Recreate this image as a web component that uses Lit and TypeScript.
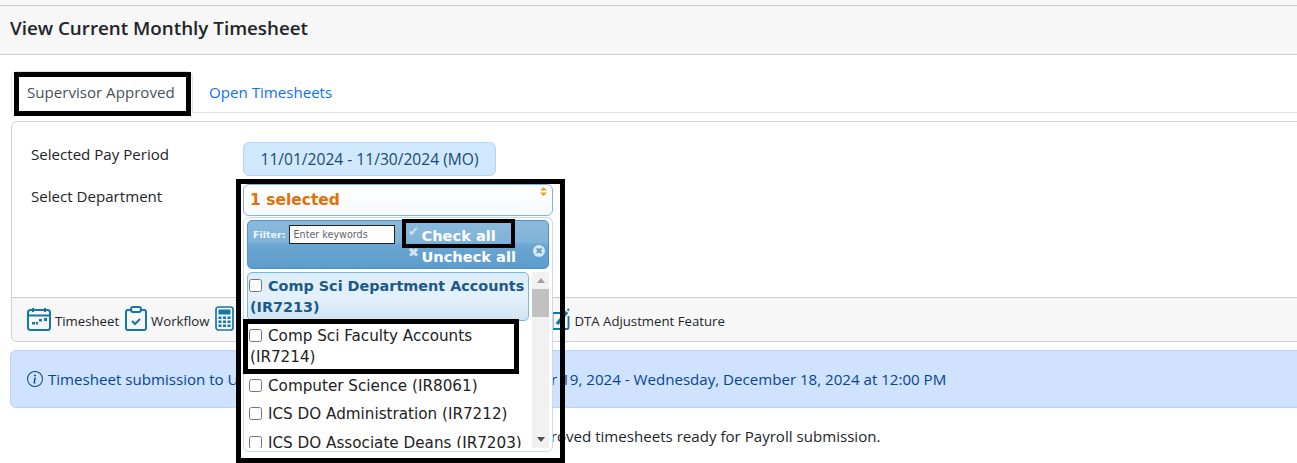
import { LitElement, html, css, svg } from 'lit'
import { customElement } from 'lit/decorators.js'

const DEPARTMENTS = [
  { name: 'Comp Sci Department Accounts (IR7213)', hover: true },
  { name: 'Comp Sci Faculty Accounts (IR7214)', hover: false },
  { name: 'Computer Science (IR8061)', hover: false },
  { name: 'ICS DO Administration (IR7212)', hover: false },
  { name: 'ICS DO Associate Deans (IR7203)', hover: false },
]

const calendarIcon = svg`<svg class="icon" width="24" height="24" viewBox="0 0 24 24" fill="none" stroke="#1577a8" stroke-width="2">
  <rect x="1" y="3" width="22" height="20" rx="2.5"/><path d="M1 8.500h22M6 1v4M18 1v4"/>
  <g fill="#1577a8" stroke="none"><rect x="5" y="15" width="3" height="2.5"/><rect x="9" y="15" width="2" height="2.5"/><rect x="12" y="12" width="3" height="2.5"/><rect x="17" y="11" width="3" height="3"/></g>
</svg>`

const clipboardIcon = svg`<svg class="icon" width="22" height="25" viewBox="0 0 22 25" fill="none" stroke="#1577a8" stroke-width="2">
  <path d="M6 4H3a2 2 0 0 0-2 2v16a2 2 0 0 0 2 2h16a2 2 0 0 0 2-2V6a2 2 0 0 0-2-2h-3"/>
  <rect x="6" y="1" width="10" height="5" rx="2"/><path d="M7 15l3 3 5-5"/>
</svg>`

const calculatorIcon = svg`<svg class="icon" width="19" height="25" viewBox="0 0 19 25" fill="none" stroke="#1577a8" stroke-width="1.7">
  <rect x="1" y="1" width="17" height="23" rx="2.5"/>
  <g fill="#1577a8" stroke="none"><rect x="3.5" y="3.5" width="12" height="5"/><rect x="3.5" y="10.5" width="3" height="2.5"/><rect x="8" y="10.5" width="3" height="2.5"/><rect x="12.5" y="10.5" width="3" height="2.5"/><rect x="3.5" y="14.5" width="3" height="2.5"/><rect x="8" y="14.5" width="3" height="2.5"/><rect x="12.5" y="14.5" width="3" height="2.5"/><rect x="3.5" y="18.5" width="3" height="2.5"/><rect x="8" y="18.5" width="3" height="2.5"/><rect x="12.5" y="18.5" width="3" height="2.5"/></g>
</svg>`

const editIcon = svg`<svg class="icon" width="18" height="24" viewBox="0 0 18 24" fill="none" stroke="#1577a8" stroke-width="1.8">
  <path d="M8 6H2a1.5 1.5 0 0 0-1.500 1.500v13A1.500 1.500 0 0 0 2 22h13a1.500 1.500 0 0 0 1.500-1.500V9"/>
  <path d="M5 17l10-12" stroke-width="3.4"/><path d="M15.500 2l1.500 1.500" stroke-width="2"/>
</svg>`

const infoIcon = svg`<svg width="16" height="16" viewBox="0 0 16 16" fill="#084298">
  <path d="M8 15A7 7 0 1 1 8 1a7 7 0 0 1 0 14zm0 1A8 8 0 1 0 8 0a8 8 0 0 0 0 16z"/>
  <path d="M8.930 6.590l-2.290.287-.082.380.450.083c.294.070.352.176.288.469l-.738 3.468c-.194.897.105 1.319.808 1.319.545 0 1.178-.252 1.465-.598l.088-.416c-.200.176-.492.246-.686.246-.275 0-.375-.193-.304-.533L8.930 6.590zM9 4.500a1 1 0 1 1-2 0 1 1 0 0 1 2 0z"/>
</svg>`

@customElement('app-root')
export class AppRoot extends LitElement {
  static override styles = css`
    :host {
      display: block;
      position: relative;
      height: 463px;
      overflow: hidden;
      background: #fff;
      font-family: 'Open Sans', 'Noto Sans', sans-serif;
      font-size: 15.1px;
      color: #212529;
    }

    .top-strip {
      height: 5px;
      background: #f6f8fa;
      border-bottom: 1px solid #ccc;
    }

    .page-title {
      margin: 0;
      height: 49px;
      box-sizing: border-box;
      display: flex;
      align-items: center;
      padding: 0 10px 4px;
      font-size: 18.8px;
      font-weight: 600;
      color: #212529;
      background: #f7f7f7;
      border-bottom: 1px solid #ccc;
    }

    .content {
      padding: 16px 10px 0 11px;
      margin-right: -30px;
    }

    .tabs {
      display: flex;
      height: 41px;
      border-bottom: 1px solid #dee2e6;
    }

    .tab {
      display: flex;
      align-items: center;
      padding: 0 16px;
      color: #0d6efd;
      white-space: nowrap;
    }

    .tab.active {
      color: #495057;
      border: 1px solid #dee2e6;
      border-bottom-color: #fff;
      border-radius: 6px 6px 0 0;
      height: 42px;
      box-sizing: border-box;
      background: #fff;
      width: 182px;
      padding: 0 15px;
    }

    .card {
      margin-top: 8px;
      border: 1px solid #d0d0d0;
      border-radius: 6px;
      height: 221px;
      box-sizing: border-box;
      display: flex;
      flex-direction: column;
    }

    .card-body {
      flex: 1;
      padding: 20px 19px 0;
      display: flex;
      flex-direction: column;
      gap: 8px;
    }

    .row {
      display: flex;
      align-items: flex-start;
    }

    .row .label {
      width: 212px;
      line-height: 24px;
    }

    .period {
      width: 253px;
      height: 34px;
      box-sizing: border-box;
      display: flex;
      align-items: center;
      justify-content: center;
      background: #cfe8fc;
      border: 1px solid #b6d4fe;
      border-radius: 6px;
      color: #1c4a72;
      font-size: 15.6px;
    }

    .card-footer {
      height: 44px;
      box-sizing: border-box;
      display: flex;
      align-items: center;
      padding: 0 15px 2px;
      font-size: 13.2px;
      background: #f7f7f7;
      border-top: 1px solid #ccc;
      border-radius: 0 0 6px 6px;
    }

    .tool {
      display: flex;
      align-items: center;
      gap: 4px;
      margin-right: 6px;
    }

    .tool span {
      padding-top: 5px;
    }

    .tool.spacer {
      width: 337px;
      margin: 0;
      justify-content: flex-start;
    }

    .alert {
      margin-top: 8px;
      margin-left: -1px;
      height: 58px;
      box-sizing: border-box;
      display: flex;
      align-items: center;
      gap: 5px;
      padding: 0 16px;
      background: #cfe2ff;
      border: 1px solid #b6d4fe;
      border-radius: 6px;
      color: #084298;
    }

    .note {
      margin: 19px 0 0;
      padding-left: 341px;
      line-height: 18px;
      white-space: nowrap;
    }

    /* multiselect popup, sits over the card */
    .multi {
      position: absolute;
      left: 241px;
      top: 184px;
      width: 312px;
      padding-left: 2px;
      box-sizing: border-box;
      background: #fff;
      font-family: 'DejaVu Sans', Verdana, sans-serif;
    }

    .multi-button {
      height: 32px;
      box-sizing: border-box;
      display: flex;
      align-items: center;
      justify-content: space-between;
      padding: 0 5px 0 6px;
      border: 1px solid #79b7e7;
      border-radius: 6px;
      background: linear-gradient(#fff, #f6fafd);
      color: #e17009;
      font-size: 15.5px;
      font-weight: 700;
    }

    .sort-arrows {
      align-self: flex-start;
      margin-top: 2px;
    }

    .multi-menu {
      margin-top: 1px;
      height: 235px;
      box-sizing: border-box;
      padding: 2px 3px 3px;
      border: 1px solid #c5dbec;
      border-radius: 6px;
      background: #fff;
      display: flex;
      flex-direction: column;
      gap: 3px;
    }

    .multi-header {
      height: 49px;
      flex: none;
      box-sizing: border-box;
      display: flex;
      align-items: flex-start;
      padding: 3px 5px;
      border: 1px solid #4f94c9;
      border-radius: 5px;
      background: linear-gradient(#8ab9dc 0, #80b3d9 45%, #6ca6d2 50%, #5c9ccc 100%);
      color: #fff;
      font-weight: 700;
      position: relative;
    }

    .filter {
      display: flex;
      align-items: center;
      gap: 4px;
      font-size: 9.5px;
      height: 21px;
      color: #eef5fb;
    }

    .filter input {
      width: 106px;
      height: 19px;
      box-sizing: border-box;
      padding: 0 3px;
      border: 1px solid #222;
      font: 400 9.6px 'DejaVu Sans', sans-serif;
      background: #fff;
    }

    .filter input::placeholder {
      color: #666;
      opacity: 1;
    }

    .check-links {
      margin-left: 12px;
      margin-top: 1px;
      font-size: 14.6px;
      line-height: 21px;
    }

    .check-links div {
      display: flex;
      align-items: center;
      gap: 2px;
    }

    .check-links span {
      width: 12px;
      font-size: 13px;
      text-align: center;
      color: #d3e4f2;
      margin-top: -8px;
    }

    .close {
      position: absolute;
      right: 3px;
      top: 24px;
      width: 12px;
      height: 12px;
      border-radius: 50%;
      background: #d7e8f5;
      color: #5c9ccc;
      font-size: 9px;
      line-height: 12px;
      text-align: center;
    }

    .list-wrap {
      flex: 1;
      min-height: 0;
      display: flex;
      gap: 3px;
    }

    ul {
      flex: 1;
      min-width: 0;
      margin: 0;
      padding: 0;
      list-style: none;
      overflow: hidden;
      font-size: 15.2px;
      line-height: 21px;
      color: #222;
    }

    li {
      padding: 2px;
      margin-bottom: 1px;
      border: 1px solid transparent;
      border-radius: 5px;
    }

    li:nth-child(2),
    li:nth-child(4) {
      margin-bottom: 2px;
    }

    li.hover {
      padding-top: 3px;
      margin-bottom: 2px;
      border-color: #79b7e7;
      background: linear-gradient(#dcecf9, #e4f1fb 50%, #d0e5f5);
      color: #1d5987;
      font-size: 14.4px;
      font-weight: 700;
    }

    li input {
      margin: 0 6px 0 -1px;
      width: 13px;
      height: 13px;
      vertical-align: -1px;
    }

    .scrollbar {
      width: 17px;
      flex: none;
      display: flex;
      flex-direction: column;
      background: #f1f1f1;
    }

    .scroll-arrow {
      height: 17px;
      display: flex;
      align-items: center;
      justify-content: center;
    }

    .scroll-thumb {
      height: 28px;
      background: #c1c1c1;
    }

    .scroll-track {
      flex: 1;
    }

    /* black callout frames drawn over the screenshot */
    .frame {
      position: absolute;
      box-sizing: border-box;
      border: 5px solid #000;
      pointer-events: none;
    }

    .frame-tab { left: 14px; top: 72px; width: 177px; height: 44px; }
    .frame-multi { left: 236px; top: 179px; width: 329px; height: 284px; }
    .frame-check { left: 402px; top: 219px; width: 113px; height: 29px; border-width: 4px; }
    .frame-item { left: 243px; top: 319px; width: 276px; height: 55px; }
  `

  override render() {
    return html`
      <div class="top-strip"></div>
      <h1 class="page-title">View Current Monthly Timesheet</h1>
      <div class="content">
        <div class="tabs">
          <div class="tab active">Supervisor Approved</div>
          <div class="tab">Open Timesheets</div>
        </div>
        <div class="card">
          <div class="card-body">
            <div class="row">
              <div class="label">Selected Pay Period</div>
              <div class="period">11/01/2024 - 11/30/2024 (MO)</div>
            </div>
            <div class="row">
              <div class="label">Select Department</div>
            </div>
          </div>
          <div class="card-footer">
            <div class="tool">${calendarIcon}<span>Timesheet</span></div>
            <div class="tool">${clipboardIcon}<span>Workflow</span></div>
            <div class="tool spacer">${calculatorIcon}</div>
            <div class="tool">${editIcon}<span>DTA Adjustment Feature</span></div>
          </div>
        </div>
        <div class="alert">
          ${infoIcon}
          <span>Timesheet submission to UCPath window is open — Tuesday, November 19, 2024 - Wednesday, December 18, 2024 at 12:00 PM</span>
        </div>
        <p class="note">There are no supervisor approved timesheets ready for Payroll submission.</p>
      </div>

      <div class="multi">
        <div class="multi-button">
          <span>1 selected</span>
          <svg class="sort-arrows" width="7" height="9" viewBox="0 0 7 9" fill="#e8a317">
            <path d="M3.500 0L7 3.500H0zM0 5.500h7L3.500 9z"/>
          </svg>
        </div>
        <div class="multi-menu">
          <div class="multi-header">
            <div class="filter">
              <span>Filter:</span>
              <input placeholder="Enter keywords" />
            </div>
            <div class="check-links">
              <div><span>✔</span>Check all</div>
              <div><span>✖</span>Uncheck all</div>
            </div>
            <div class="close">✖</div>
          </div>
          <div class="list-wrap">
            <ul>
              ${DEPARTMENTS.map(
                d => html`<li class=${d.hover ? 'hover' : 'plain'}><input type="checkbox" />${d.name}</li>`
              )}
            </ul>
            <div class="scrollbar">
              <div class="scroll-arrow">
                <svg width="8" height="5" viewBox="0 0 8 5" fill="#a0a0a0"><path d="M4 0l4 5H0z"/></svg>
              </div>
              <div class="scroll-thumb"></div>
              <div class="scroll-track"></div>
              <div class="scroll-arrow">
                <svg width="8" height="5" viewBox="0 0 8 5" fill="#505050"><path d="M0 0h8L4 5z"/></svg>
              </div>
            </div>
          </div>
        </div>
      </div>

      <div class="frame frame-tab"></div>
      <div class="frame frame-multi"></div>
      <div class="frame frame-check"></div>
      <div class="frame frame-item"></div>
    `
  }
}

declare global {
  interface HTMLElementTagNameMap {
    'app-root': AppRoot
  }
}
